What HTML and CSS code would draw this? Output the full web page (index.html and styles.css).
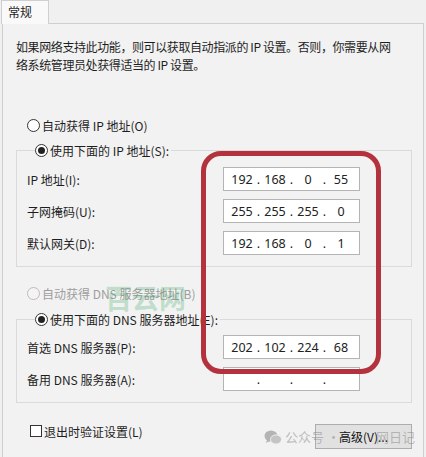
FILE: index.html
```html
<!DOCTYPE html>
<html lang="zh">
<head>
<meta charset="utf-8">
<title>IPv4 属性</title>
<link rel="stylesheet" href="styles.css">
</head>
<body>
<div class="tabbar"><div class="tab">常规</div></div>
<div class="panel">
  <p class="desc">如果网络支持此功能，则可以获取自动指派的 IP 设置。否则，你需要从网<br>络系统管理员处获得适当的 IP 设置。</p>

  <div class="radio-row first"><span class="radio"></span><span>自动获得 IP 地址(O)</span></div>
  <fieldset class="group ip-group">
    <legend class="radio-row"><span class="radio checked"></span><span>使用下面的 IP 地址(S):</span></legend>
    <div class="field-row"><span class="label">IP 地址(I):</span>
      <div class="ipbox"><span class="seg">192</span><span class="dot">.</span><span class="seg">168</span><span class="dot">.</span><span class="seg">0</span><span class="dot">.</span><span class="seg">55</span></div></div>
    <div class="field-row"><span class="label">子网掩码(U):</span>
      <div class="ipbox"><span class="seg">255</span><span class="dot">.</span><span class="seg">255</span><span class="dot">.</span><span class="seg">255</span><span class="dot">.</span><span class="seg">0</span></div></div>
    <div class="field-row"><span class="label">默认网关(D):</span>
      <div class="ipbox"><span class="seg">192</span><span class="dot">.</span><span class="seg">168</span><span class="dot">.</span><span class="seg">0</span><span class="dot">.</span><span class="seg">1</span></div></div>
  </fieldset>

  <div class="radio-row dns-auto disabled"><span class="radio"></span><span>自动获得 DNS 服务器地址(B)</span></div>
  <fieldset class="group dns-group">
    <legend class="radio-row"><span class="radio checked"></span><span>使用下面的 DNS 服务器地址(E):</span></legend>
    <div class="field-row"><span class="label">首选 DNS 服务器(P):</span>
      <div class="ipbox"><span class="seg">202</span><span class="dot">.</span><span class="seg">102</span><span class="dot">.</span><span class="seg">224</span><span class="dot">.</span><span class="seg">68</span></div></div>
    <div class="field-row"><span class="label">备用 DNS 服务器(A):</span>
      <div class="ipbox"><span class="seg"></span><span class="dot">.</span><span class="seg"></span><span class="dot">.</span><span class="seg"></span><span class="dot">.</span><span class="seg"></span></div></div>
  </fieldset>

  <div class="footer">
    <label class="check-row"><span class="checkbox"></span><span>退出时验证设置(L)</span></label>
    <button class="btn">高级(V)...</button>
  </div>
</div>

<div class="highlight"></div>
<div class="wm-green">百云网</div>
<div class="wm-gray">
  <svg class="wechat" width="18" height="15" viewBox="0 0 18 15"><ellipse cx="7" cy="6" rx="6.5" ry="5.5" fill="#b4b4b4"/><ellipse cx="12" cy="9.5" rx="5.5" ry="4.6" fill="#c4c4c4" stroke="#f0f0f0" stroke-width="1"/><path d="M3 10 L2 13 L6 11 Z" fill="#b4b4b4"/></svg>
  <span>公众号 ·</span>
</div>
<div class="wm-gray2">网日记</div>
</body>
</html>
```

FILE: styles.css
```css
* { box-sizing: border-box; }
html, body { margin: 0; padding: 0; }
body {
  width: 426px;
  height: 457px;
  overflow: hidden;
  position: relative;
  background: #f0f0f0;
  color: #1e1e1e;
  font-family: "Noto Sans CJK SC", "Noto Sans", sans-serif;
  font-size: 12px;
}
.tabbar {
  height: 23px;
  display: flex;
  padding-left: 1px;
}
.tab {
  width: 48px;
  height: 24px;
  border: 1px solid #cfcfcf;
  border-bottom: none;
  background: #f9f9f9;
  padding-left: 6px;
  line-height: 22px;
  position: relative;
  z-index: 1;
}
.panel {
  margin-left: 2px;
  width: 422px;
  height: 440px;
  border: 1px solid #cfcfcf;
  border-bottom: none;
  background: #f2f2f2;
  padding: 14px 11px 0 13px;
}
.desc {
  margin: 0;
  line-height: 18px;
  white-space: nowrap;
  letter-spacing: -0.4px;
}
.radio-row {
  display: flex;
  align-items: center;
  height: 20px;
  padding-left: 11px;
  white-space: nowrap;
}
.radio-row.first { margin-top: 41px; }
.radio {
  width: 13px;
  height: 13px;
  border: 1px solid #333;
  border-radius: 50%;
  background: #fff;
  margin-right: 2px;
  display: flex;
  align-items: center;
  justify-content: center;
  flex: none;
}
.radio.checked::after {
  content: "";
  width: 7px;
  height: 7px;
  border-radius: 50%;
  background: #222;
}
.disabled { color: #9d9d9d; }
.disabled .radio { border-color: #bcbcbc; background: #f4f4f4; }
.group {
  margin: 5px 0 0 0;
  padding: 7px 0 11px 10px;
  border: 1px solid #dadada;
  min-width: 0;
}
.group legend.radio-row {
  padding: 0 2px 0 0;
  margin-left: 8px;
}
.dns-group { padding-top: 6px; margin-top: 6px; }
.dns-auto { margin-top: 16px; }
.field-row {
  display: grid;
  grid-template-columns: 196px 137px;
  align-items: center;
  height: 24px;
}
.field-row + .field-row { margin-top: 8px; }
.label { white-space: nowrap; }
.ipbox {
  height: 24px;
  border: 1px solid #b4b4b4;
  background: #fff;
  display: flex;
  align-items: center;
  padding-left: 5px;
  font-family: "Noto Sans", sans-serif;
  font-size: 12.5px;
  color: #222;
}
.seg { width: 26px; text-align: center; }
.dot { width: 7px; text-align: center; }
.footer {
  display: flex;
  justify-content: space-between;
  align-items: flex-start;
  margin-top: 18px;
}
.check-row {
  display: flex;
  align-items: center;
  height: 20px;
  padding-left: 14px;
}
.checkbox {
  width: 12px;
  height: 12px;
  border: 1px solid #333;
  background: #fff;
  margin-right: 2px;
}
.btn {
  margin-top: 3px;
  width: 97px;
  height: 25px;
  border: 1px solid #adadad;
  background: #e1e1e1;
  font-family: "Noto Sans CJK SC", sans-serif;
  font-size: 12px;
  color: #111;
  padding: 0;
}
.highlight {
  position: absolute;
  left: 201px;
  top: 151px;
  width: 180px;
  height: 223px;
  border: 5px solid #b3323d;
  border-radius: 20px;
}
.wm-green {
  position: absolute;
  left: 105px;
  top: 284px;
  font-size: 27px;
  line-height: 27px;
  font-weight: bold;
  color: rgba(70, 170, 110, 0.3);
  white-space: nowrap;
}
.wm-gray {
  position: absolute;
  left: 264px;
  top: 428px;
  display: flex;
  align-items: center;
  gap: 3px;
  font-size: 13px;
  line-height: 18px;
  color: rgba(140, 140, 140, 0.55);
  white-space: nowrap;
}
.wm-gray2 {
  position: absolute;
  left: 376px;
  top: 428px;
  font-size: 13px;
  line-height: 18px;
  color: rgba(140, 140, 140, 0.55);
  white-space: nowrap;
}
```
